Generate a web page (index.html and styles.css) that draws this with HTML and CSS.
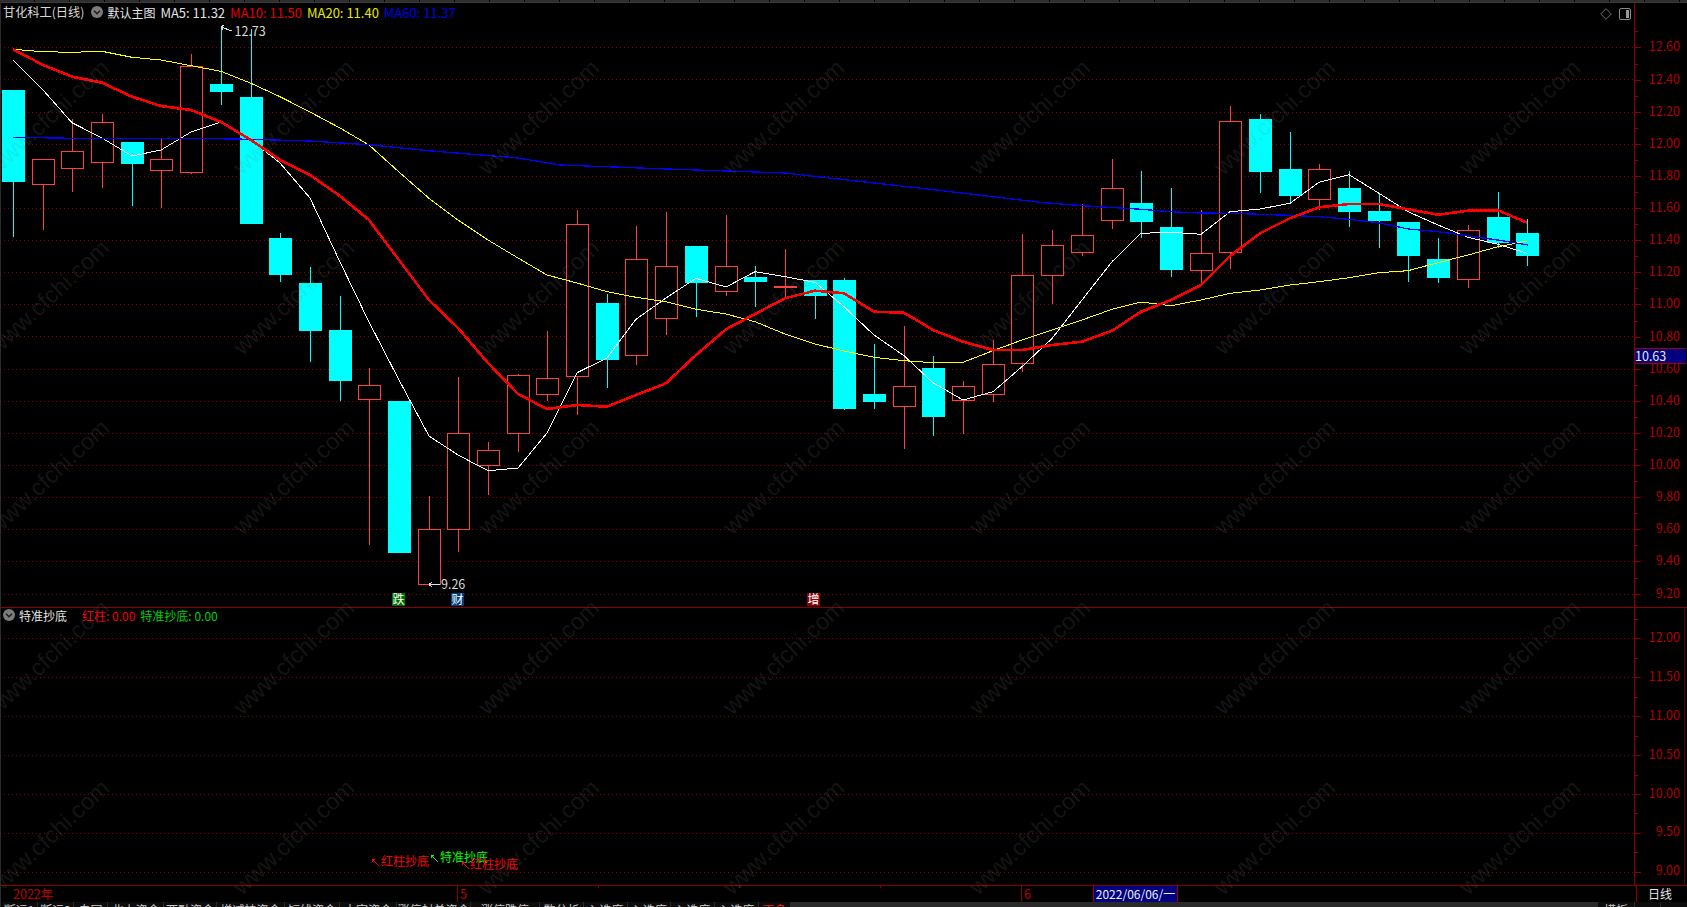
FILE: index.html
```html
<!DOCTYPE html>
<html lang="zh-CN">
<head>
<meta charset="utf-8">
<title>甘化科工(日线)</title>
<link rel="stylesheet" href="styles.css">
</head>
<body>
<div class="page">
  <div class="topstrip"></div>

  <section class="panel panel-main">
    <div class="plot">
      <svg id="main-plot" class="plot-svg" viewBox="0 3 1634 604" shape-rendering="crispEdges"></svg>
      <div class="legend">
        <span class="stock">甘化科工(日线)</span>
        <svg class="chev" viewBox="0 0 12 12"><circle cx="6" cy="6" r="6"/><path d="M3 4.8 6 7.8 9 4.8"/></svg>
        <span class="main-name">默认主图</span>
        <span class="ma-label c-white">MA5: 11.32</span>
        <span class="ma-label c-red">MA10: 11.50</span>
        <span class="ma-label c-yellow">MA20: 11.40</span>
        <span class="ma-label c-blue">MA60: 11.37</span>
      </div>
      <div class="tools">
        <svg class="tool" viewBox="0 0 12 12"><path d="M6 .7 11.3 6 6 11.3 .7 6Z"/></svg>
        <svg class="tool tool-side" viewBox="0 0 12 12"><rect x=".5" y=".5" width="11" height="11" rx="1.5"/><rect class="tool-fill" x="7" y="2" width="3" height="8"/></svg>
      </div>
    </div>
    <div class="axis axis-main">
      <div class="tick-row">12.60</div><div class="tick-row">12.40</div><div class="tick-row">12.20</div>
      <div class="tick-row">12.00</div><div class="tick-row">11.80</div><div class="tick-row">11.60</div>
      <div class="tick-row">11.40</div><div class="tick-row">11.20</div><div class="tick-row">11.00</div>
      <div class="tick-row">10.80</div><div class="tick-row">10.60</div><div class="tick-row">10.40</div>
      <div class="tick-row">10.20</div><div class="tick-row">10.00</div><div class="tick-row">9.80</div>
      <div class="tick-row">9.60</div><div class="tick-row">9.40</div><div class="tick-row">9.20</div>
      <div class="price-flag">10.63</div>
    </div>
  </section>

  <section class="panel panel-sub">
    <div class="plot">
      <svg id="sub-plot" class="plot-svg" viewBox="0 608 1634 277" shape-rendering="crispEdges"></svg>
      <div class="legend legend-sub">
        <svg class="chev" viewBox="0 0 12 12"><circle cx="6" cy="6" r="6"/><path d="M3 4.8 6 7.8 9 4.8"/></svg>
        <span class="main-name sub-name">特准抄底</span>
        <span class="c-red2">红柱: 0.00</span>
        <span class="c-green">特准抄底: 0.00</span>
      </div>
    </div>
    <div class="axis axis-sub">
      <div class="tick-row">12.00</div><div class="tick-row">11.50</div><div class="tick-row">11.00</div>
      <div class="tick-row">10.50</div><div class="tick-row">10.00</div><div class="tick-row">9.50</div>
      <div class="tick-row">9.00</div>
    </div>
  </section>

  <div class="datebar">
    <div class="d-year">2022年</div>
    <div class="d-month d-may">5</div>
    <div class="d-month d-june">6</div>
    <div class="d-cursor">2022/06/06/一</div>
    <div class="d-fill"></div>
    <div class="d-period">日线</div>
  </div>

  <nav class="tabs">
    <span class="tab w36">断运1</span><span class="tab w35">断运2</span><span class="tab w33">自同</span>
    <span class="tab w55">北上资金</span><span class="tab w52">两融资金</span><span class="tab w67">增减持资金</span>
    <span class="tab w54">短线资金</span><span class="tab w56">大宗资金</span><span class="tab w73">涨停封单资金</span>
    <span class="tab w68">涨停跌停</span><span class="tab w43">数分析</span><span class="tab w43">入选度</span>
    <span class="tab w42">入选度</span><span class="tab w43">入选度</span><span class="tab w43">入选度</span>
    <span class="tab tab-red w31">更多</span>
    <span class="tabs-fill"></span>
    <span class="tab w36">模板</span><span class="tab w25"></span><span class="tab w26"></span>
  </nav>

  <svg id="watermark" class="watermark" viewBox="0 0 1687 907"></svg>
</div>
<script src="script.js"></script>
</body>
</html>
```

FILE: styles.css
```css
* { box-sizing: border-box; }
html, body { margin: 0; padding: 0; background: #000; }
body { font-family: "Noto Sans CJK SC", "Noto Sans", sans-serif; font-size: 12px; color: #ddd; }
.page { position: relative; width: 1687px; height: 907px; overflow: hidden; background: #000; display: flex; flex-direction: column; border-left: 1px solid #2c2c2c; }

.topstrip { height: 3px; flex: none; margin-left: -1px; background: repeating-linear-gradient(90deg, #2e2e2e 0, #2e2e2e 34px, #000 34px, #000 35px); border-bottom: 1px solid #3a3a3a; }

.panel { display: flex; flex: none; border-bottom: 1px solid #8a0000; }
.panel-main { height: 605px; }
.panel-sub { height: 278px; }

.plot { position: relative; width: 1633px; flex: none; }
.plot-svg { display: block; width: 1634px; height: 100%; margin-left: -1px; }

.axis { position: relative; width: 53px; flex: none; border-left: 1px solid #8a0000; color: #b00000; display: flex; flex-direction: column; }
.axis-main { padding-top: 27.4px; }
.axis-sub { padding-top: 10px; border-right: 1px solid #5a0000; margin-right: 2px; width: 51px; }
.tick-row { position: relative; flex: none; height: 32.13px; line-height: 32.13px; text-align: right; padding-right: 7px; font-size: 12.5px; }
.axis-sub .tick-row { height: 38.9px; line-height: 38.9px; padding-right: 4px; }
.tick-row::before { content: ""; position: absolute; left: 0; top: 50%; width: 6px; height: 1px; margin-top: 1px; background: #8a0000; }
.tick-row::after { content: ""; position: absolute; left: 0; top: 1px; width: 3px; height: 1px; background: #8a0000; }

.price-flag { position: absolute; left: 0; top: 345px; width: 51px; height: 16px; line-height: 14px; padding-left: 0; background: #000080; color: #e8e8e8; border-top: 1px solid #a00000; border-bottom: 1px solid #a00000; font-size: 12.5px; }

.legend { position: absolute; left: 2px; top: -1px; height: 20px; display: flex; align-items: center; gap: 5px; white-space: nowrap; }
.legend-sub { left: 2px; top: -3px; }
.chev { width: 12px; height: 12px; flex: none; margin-left: 2px; margin-right: 0; }
.legend-sub .chev { margin-left: 0; }
.chev circle { fill: #7c7c7c; }
.chev path { fill: none; stroke: #1c1c1c; stroke-width: 1.4; }
.stock { color: #d6d6d6; font-size: 12.2px; }
.main-name { color: #e4e4e4; margin-left: -1px; margin-right: 0; }
.sub-name { margin-left: -1px; margin-right: 10px; }
.ma-label { font-size: 13px; }
.c-white { color: #e2e2e2; }
.c-red { color: #e00000; }
.c-yellow { color: #e8e800; }
.c-blue { color: #0000e0; }
.c-red2 { color: #f00000; }
.c-green { color: #00d000; }

.tools { position: absolute; right: 3px; top: 5px; display: flex; align-items: center; gap: 7px; }
.tool { width: 12px; height: 12px; display: block; fill: none; stroke: #6e6e6e; }
.tool-side { stroke: #8a8a8a; }
.tool-fill { fill: #9a9a9a; stroke: none; }

.datebar { display: flex; flex: none; height: 16px; line-height: 15px; color: #c00000; font-size: 12.5px; }
.d-year { width: 456px; padding-left: 12px; flex: none; }
.d-month { flex: none; border-left: 1px solid #8a0000; padding-left: 2px; }
.d-may { width: 564px; background: linear-gradient(90deg, transparent 140px, #8a0000 140px) 0 0 / 141px 2px repeat-x; }
.d-june { width: 72px; }
.d-cursor { width: 85px; flex: none; background: #000080; color: #eee; border-left: 1px solid #a00000; border-right: 1px solid #a00000; text-align: center; white-space: nowrap; font-size: 12px; }
.d-fill { flex: 1; }
.d-period { width: 51px; flex: none; color: #e4e4e4; border-left: 1px solid #8a0000; padding-left: 11px; font-size: 12px; }

.tabs { height: 5px; flex: none; display: flex; overflow: hidden; background: #2a2a2a; gap: 1px; margin-left: -1px; padding-left: 1px; color: #ccc; }
.tab { display: block; height: 16px; flex: none; background: #0c0c0c; text-align: center; line-height: 15px; font-size: 12px; white-space: nowrap; overflow: hidden; }
.tabs-fill { flex: 1; }
.tab-red { color: #f02020; }
.w25 { width: 25px; } .w26 { width: 26px; } .w31 { width: 31px; } .w33 { width: 33px; } .w35 { width: 35px; }
.w36 { width: 36px; } .w42 { width: 42px; } .w43 { width: 43px; } .w52 { width: 52px; } .w54 { width: 54px; }
.w55 { width: 55px; } .w56 { width: 56px; } .w67 { width: 67px; } .w68 { width: 68px; } .w73 { width: 73px; }

.grid { stroke: #900000; stroke-width: 1; stroke-dasharray: 1 3; shape-rendering: geometricPrecision; }
.wick-up, .body-up { stroke: #ff4040; }
.body-up { fill: #000; }
.wick-down { stroke: #00ffff; }
.body-down { fill: #00ffff; }
.doji { fill: #ff4040; }
.ma { fill: none; stroke-linejoin: round; }
.ma5 { stroke: #fff; stroke-width: 1; }
.ma10 { stroke: #ff0000; stroke-width: 2.6; }
.ma20 { stroke: #ffff00; stroke-width: 1; }
.ma60 { stroke: #0000ff; stroke-width: 1.3; }
.arrow { fill: none; stroke: #e0e0e0; stroke-width: 1; }
.arrow-red { stroke: #ff0000; }
.arrow-green { stroke: #00ff00; }
.mark { font-size: 12.5px; fill: #d8d8d8; }
.badge-text { font-size: 12px; fill: #fff; text-anchor: middle; }
.badge-green { fill: #007000; }
.badge-blue { fill: #003f7f; }
.badge-red { fill: #8b0000; }
.signal { font-size: 12px; }
.signal-red { fill: #ff0000; }
.signal-green { fill: #00ff00; }

.watermark { position: absolute; left: -1px; top: 0; width: 1687px; height: 907px; pointer-events: none; }
.wm { font-family: "Liberation Sans", sans-serif; font-size: 23.5px; fill: rgba(128, 128, 128, 0.17); text-anchor: middle; }
```

FILE: script.js
```js
// [high, bodyTop, bodyBottom, low, up?]
var candles = [
  [90,90,181.7,236.7,0],[159.3,159.3,184.3,230,1],[119.3,151.3,167.7,191.7,1],[114.3,122.3,161.7,187.7,1],
  [142,142,164,206,0],[138.3,159.3,169.7,207.7,1],[54,66.3,171.7,174,1],[27,84,91.7,105,0],
  [29,97,223.7,223.7,0],[233.3,238,275,281.7,0],[266.7,283,330.7,361.5,0],[296,330,381,401,0],
  [368.3,385.3,399.3,545,1],[401,401,552.7,552.7,0],[496,529.3,584.3,584.3,1],[376.7,433.3,528.7,551.7,1],
  [442,450.3,465.3,495,1],[374,375.3,433.3,451.7,1],[331,378.3,394.3,400.7,1],[210,224.3,375.7,415,1],
  [294,303,360,388,0],[226,259.3,354.7,365,1],[212.3,266.3,317.7,335,1],[246,246,282.7,316.7,0],
  [215,266.3,290.7,296,1],[266,277,282,307,0],[249.3,285.5,287.5,296.7,2],[280,280,296,319,0],
  [278,280,409,410,0],[344,394,402,409,0],[326,386.3,405.7,449,1],[356,368,417,436,0],
  [381,386.3,399.7,434,1],[340,364.3,393.7,402,1],[234,275.3,362.7,371.7,1],[230.3,245.3,275.3,304,1],
  [204,235.3,251.7,255.7,1],[159,188.3,219.7,229,1],[171,203,222,237.7,0],[188,227,270,277,0],
  [210,253.3,269.7,283,1],[106,121.3,251.7,269,1],[114,119,172,193,0],[132,169,196,203,0],
  [164,169.3,198.7,210,1],[171,188,212,227,0],[193,211,221,248,0],[222,222,256,282,0],
  [238,259,278,283,0],[225,230.3,278.7,288,1],[192,217,243,248,0],[219,233,256,266,0]
];
var ma5 = [60,90,122.7,138,156,150,132,122,140,163,198,262,322,380,436,455,470.7,468,433,372.7,358,319.3,298,278.3,287,271.7,276.7,282.3,306.7,335,355.7,382.7,400,391.7,366.7,338.5,300,261.7,233.3,232.3,234.3,211.7,209,203.3,182.3,174.7,193.3,211.7,225,237.3,244.3,253.3];
var ma10 = [49.3,65,76.7,82.7,96.7,106,110,122,140,160,175,196,220,260,300,328,363,394,409,405,406.7,395,383.3,355,329.3,314,298.3,290.7,293.3,311.7,312.7,330,341.7,350,350,345,341.7,330.7,311.7,300,285,256,233.3,218.3,207.3,204,204,209.3,214.7,210.7,210.3,222.7];
var ma20 = [49.3,51.7,52.3,51.3,57.3,60,65.7,71.3,83.3,96.7,112,128,145,172,198.3,220,240,258,275,283,291.7,297.3,301.7,309.3,314,321.7,334,344,351,357.3,360.7,362.7,362.3,350.7,340,330,320,309.3,302,305.7,300,293.3,290,285,281.7,277.7,272.7,270.7,262.7,255,246.7,241];
var ma60 = "13,137.3 72.5,138.3 191,138.3 250,139.3 310,141 368,144.7 428.6,150.7 518,158 560,165 667,169 785,173 936.7,190 1040,202.3 1082.4,205.7 1141.2,209.3 1171,211.7 1200,213 1230,213.3 1260,214.3 1289,215.3 1319,216.7 1349,219.3 1378,222.7 1408.5,229 1438,231.7 1467,235.7 1497.6,240 1527.6,245";

function cx(i) { return Math.round(13 + 29.69 * i); }
function pts(a) { return a.map(function (y, i) { return cx(i) + "," + y; }).join(" "); }
function line(x1, y1, x2, y2, c) { return '<line class="' + c + '" x1="' + x1 + '" y1="' + y1 + '" x2="' + x2 + '" y2="' + y2 + '"/>'; }

var m = "";
for (var k = 0; k < 18; k++) {
  var gy = Math.round(47.3 + k * 32.13) + 0.5;
  m += line(0, gy, 1634, gy, "grid");
}
candles.forEach(function (c, i) {
  var x = cx(i), px = x + 0.5, t = Math.round(c[1]), b = Math.round(c[2]), hi = Math.round(c[0]), lo = Math.round(c[3]);
  var kind = c[4];
  var wc = kind === 0 ? "wick-down" : "wick-up";
  if (hi < t) m += line(px, hi, px, t, wc);
  if (lo > b) m += line(px, b, px, lo, wc);
  if (kind === 0) {
    m += '<rect class="body-down" x="' + (x - 11) + '" y="' + t + '" width="23" height="' + (b - t) + '"/>';
  } else if (kind === 1) {
    m += '<rect class="body-up" x="' + (x - 11 + 0.5) + '" y="' + (t + 0.5) + '" width="22" height="' + (b - t) + '"/>';
  } else {
    m += '<rect class="doji" x="' + (x - 11) + '" y="' + t + '" width="23" height="2"/>';
  }
});
m += '<polyline class="ma ma5" points="' + pts(ma5) + '"/>';
m += '<polyline class="ma ma20" points="' + pts(ma20) + '"/>';
m += '<polyline class="ma ma60" points="' + ma60 + '"/>';
m += '<polyline class="ma ma10" points="' + pts(ma10) + '"/>';

// extreme-price markers
m += '<path class="arrow" d="M221 27 232 31M221 27 224 25M221 27 223 30"/>';
m += '<text class="mark" x="234.5" y="36">12.73</text>';
m += '<path class="arrow" d="M429 584.5H440M429 584.5 432 582M429 584.5 432 587"/>';
m += '<text class="mark" x="441" y="589">9.26</text>';

// event badges
[[392, "badge-green", "跌"], [451, "badge-blue", "财"], [807, "badge-red", "增"]].forEach(function (b) {
  m += '<rect class="' + b[1] + '" x="' + b[0] + '" y="593" width="13" height="13"/>';
  m += '<text class="badge-text" x="' + (b[0] + 6.5) + '" y="604">' + b[2] + '</text>';
});
document.getElementById("main-plot").innerHTML = m;

var s = "";
for (var j = 0; j < 7; j++) {
  var sy = Math.round(638.3 + j * 38.9) + 0.5;
  s += line(0, sy, 1634, sy, "grid");
}
[[372, 859, "arrow-red", 381, 866, "signal-red", "红柱抄底"],
 [431, 855, "arrow-green", 440, 862, "signal-green", "特准抄底"],
 [462, 862, "arrow-red", 470, 869, "signal-red", "红柱抄底"]].forEach(function (g) {
  var ax = g[0], ay = g[1];
  s += '<path class="arrow ' + g[2] + '" d="M' + ax + ' ' + ay + 'L' + (ax + 7) + ' ' + (ay + 7) + 'M' + ax + ' ' + ay + 'h3M' + ax + ' ' + ay + 'v3"/>';
  s += '<text class="signal ' + g[5] + '" x="' + g[3] + '" y="' + g[4] + '">' + g[6] + '</text>';
});
document.getElementById("sub-plot").innerHTML = s;

var w = "";
[115, 295, 475, 655, 835].forEach(function (y) {
  [54, 299, 544, 789, 1035, 1280, 1525].forEach(function (x) {
    w += '<text class="wm" transform="translate(' + x + ' ' + (y + 8) + ') rotate(-43)">www.cfchi.com</text>';
  });
});
document.getElementById("watermark").innerHTML = w;
```
